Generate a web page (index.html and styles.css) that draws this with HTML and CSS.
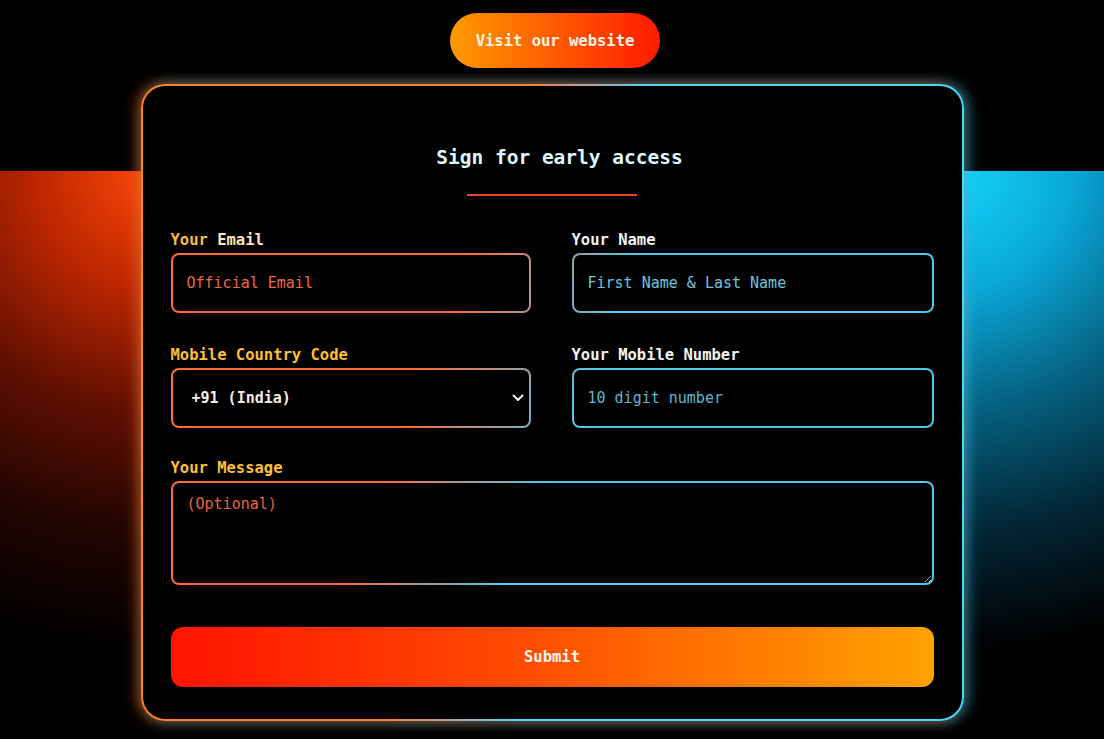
FILE: index.html
```html
<!DOCTYPE html>
<html lang="en">
<head>
  <meta charset="utf-8"/>
  <meta name="viewport" content="width=device-width, initial-scale=1.0">
  <title>Sign for early access</title>
  <link rel="stylesheet" href="styles.css">
</head>
<body>
  <main class="page">
    <a class="visit" href="#">Visit our website</a>

    <form class="card" onsubmit="return false">
      <h2 class="title">Sign for early access</h2>
      <div class="rule"></div>

      <div class="grid">
        <div class="field">
          <label class="warm" for="email">Your <span class="pale">Email</span></label>
          <input id="email" class="email" type="email" placeholder="Official Email">
        </div>
        <div class="field">
          <label class="cool" for="name">Your Name</label>
          <input id="name" class="name" type="text" placeholder="First Name &amp; Last Name">
        </div>

        <div class="field">
          <label class="warm" for="code">Mobile Country Code</label>
          <div class="select-wrap">
            <select id="code">
              <option>+91 (India)</option>
              <option>+1 (USA)</option>
              <option>+44 (UK)</option>
            </select>
            <svg class="chevron" width="12" height="8" viewBox="0 0 12 8">
              <polyline points="1.5,1.5 6,6 10.5,1.5" fill="none" stroke="#f2f2f2" stroke-width="2" stroke-linecap="round" stroke-linejoin="round"/>
            </svg>
          </div>
        </div>
        <div class="field">
          <label class="cool" for="mobile">Your Mobile Number</label>
          <input id="mobile" class="mobile" type="tel" placeholder="10 digit number">
        </div>

        <div class="field wide">
          <label class="warm" for="message">Your Message</label>
          <textarea id="message" placeholder="(Optional)"></textarea>
        </div>
      </div>

      <button class="submit" type="submit">Submit</button>
    </form>
  </main>
</body>
</html>
```

FILE: styles.css
```css
html {
  background: #000;
}

body {
  margin: 0;
  min-height: 739px;
  font-family: 'DejaVu Sans Mono', 'Liberation Mono', monospace;
  color: #f2f2f2;
  background-color: #000;
  background-image:
    radial-gradient(ellipse 500px 480px at 160px 0, #ff4a0a 0%, #bc2600 25%, #601000 50%, #220500 75%, rgba(0,0,0,0) 100%),
    radial-gradient(ellipse 500px 480px at 945px 0, #16d6fc 0%, #0aa8d8 25%, #05607f 50%, #022636 75%, rgba(0,0,0,0) 100%);
  background-position: 0 171px;
  background-size: 100% 568px;
  background-repeat: no-repeat;
}

.page {
  display: flex;
  flex-direction: column;
  align-items: center;
  padding-top: 13px;
}

.visit {
  display: flex;
  align-items: center;
  justify-content: center;
  width: 210px;
  height: 55px;
  margin-left: 6px;
  border-radius: 28px;
  background: linear-gradient(90deg, #ff9a00, #ff5a00 50%, #ff1a00);
  color: #fff4e4;
  font-size: 15.5px;
  font-weight: bold;
  text-decoration: none;
  box-sizing: border-box;
}

.card {
  width: 823px;
  margin-top: 16px;
  padding: 60px 28px 32px;
  border: 2px solid transparent;
  border-radius: 24px;
  box-sizing: border-box;
  background:
    linear-gradient(#000, #000) padding-box,
    linear-gradient(102deg, #ff8030 43%, #b0a0a8 48%, #48d8f8 53%) fixed border-box;
  box-shadow: -4px 0 14px rgba(255, 100, 20, 0.55), 4px 0 14px rgba(30, 200, 255, 0.55);
}

.title {
  margin: 0;
  padding-left: 15px;
  text-align: center;
  font-size: 19.5px;
  line-height: 24px;
  color: #def8ff;
}

.rule {
  width: 170px;
  height: 2px;
  margin: 24px auto 0;
  background: #e8461e;
}

.grid {
  display: grid;
  grid-template-columns: 360px 362px;
  justify-content: space-between;
  row-gap: 33px;
  margin-top: 35px;
}

.field.wide {
  grid-column: 1 / -1;
}

.field.wide label {
  margin-top: -2px;
}

label {
  display: block;
  font-size: 15.5px;
  line-height: 18px;
  font-weight: bold;
  margin-bottom: 4px;
}

label.warm {
  color: #ffbe38;
}

label.cool {
  color: #f4f4f4;
}

.pale {
  color: #ffe4c2;
}

input, select, textarea {
  display: block;
  width: 100%;
  height: 60px;
  margin: 0;
  padding: 0 14px;
  font-family: inherit;
  font-size: 15px;
  border: 2px solid transparent;
  border-radius: 8px;
  box-sizing: border-box;
  outline: none;
  color: #f2f2f2;
  background:
    linear-gradient(#000, #000) padding-box,
    linear-gradient(112deg, #ff6a35 41%, #a89898 47%, #4ccaea 53%) fixed border-box;
}

.email::placeholder { color: #e86a45; }
.name::placeholder { color: #6cc6df; }
.mobile::placeholder { color: #5fb6cf; }
textarea::placeholder { color: #e8643c; }

.select-wrap {
  position: relative;
}

select {
  appearance: none;
  -webkit-appearance: none;
  padding-left: 19px;
  font-weight: bold;
  color: #f6eee6;
}

.chevron {
  position: absolute;
  right: 7px;
  top: 26px;
}

textarea {
  height: 104px;
  padding: 12px 14px;
  resize: vertical;
  color-scheme: dark;
}

.submit {
  display: block;
  width: 100%;
  height: 60px;
  margin-top: 42px;
  border: none;
  border-radius: 12px;
  background: linear-gradient(90deg, #ff1400, #ff4a00 45%, #ff7a00 75%, #ffa200);
  color: #fff6ee;
  font-family: inherit;
  font-size: 15.5px;
  font-weight: bold;
  cursor: pointer;
}
```
